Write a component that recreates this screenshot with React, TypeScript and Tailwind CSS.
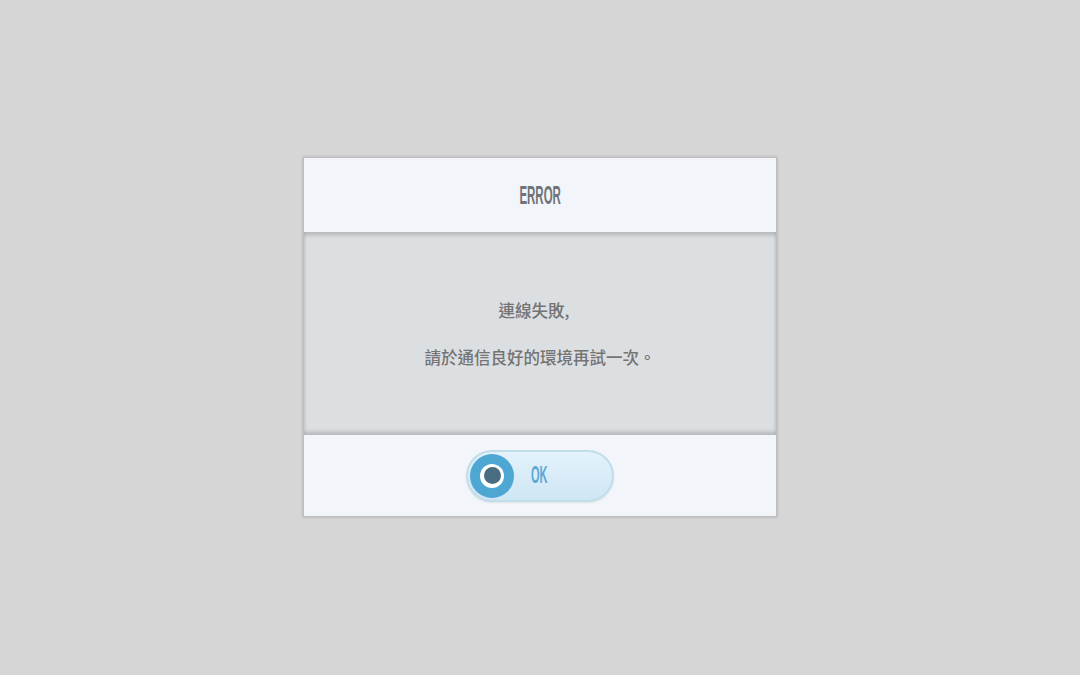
import React from "react";

const condensed = { fontFamily: '"Liberation Sans", Arial, sans-serif' };

function OkButton() {
  return (
    <button className="relative flex h-[52px] w-[148px] items-center rounded-full border-2 border-[#c3dcea] bg-gradient-to-b from-[#e3f2fb] to-[#cfe6f4] pl-[2px] shadow-[0_1px_2px_rgba(0,0,0,0.08)]">
      <span className="flex h-[44px] w-[44px] items-center justify-center rounded-full bg-[#4ea6d3]">
        <span className="flex h-[24px] w-[24px] items-center justify-center rounded-full bg-white">
          <span className="h-[17px] w-[17px] rounded-full bg-[#4a6c80]" />
        </span>
      </span>
      <span
        className="ml-[17px] inline-block origin-left scale-x-[0.48] text-[23px] font-bold leading-none text-[#5aa9d4]"
        style={condensed}
      >
        OK
      </span>
    </button>
  );
}

export default function App() {
  return (
    <div className="flex h-[675px] w-[1080px] items-center justify-center bg-[#d6d6d6]">
      <div className="mt-[-1px] flex w-[474px] flex-col border border-[#bdbdbd] bg-[#f2f6fb] shadow-[0_0_3px_rgba(0,0,0,0.2)]">
        <div className="flex h-[74px] items-center justify-center">
          <span
            className="inline-block scale-x-[0.46] text-[25px] font-bold leading-none text-[#717377]"
            style={condensed}
          >
            ERROR
          </span>
        </div>
        <div
          className="flex h-[203px] flex-col items-center justify-center gap-[27px] bg-[#dcdfe2] text-[16.5px] font-medium text-[#747474] shadow-[inset_0_4px_4px_-1px_rgba(0,0,0,0.18),inset_0_-4px_4px_-1px_rgba(0,0,0,0.18)]"
          style={{ fontFamily: '"Noto Sans CJK TC", "Noto Sans", sans-serif' }}
        >
          <p className="mr-[12px] leading-5">連線失敗,</p>
          <p className="leading-5">請於通信良好的環境再試一次。</p>
        </div>
        <div className="flex h-[81px] items-center justify-center">
          <OkButton />
        </div>
      </div>
    </div>
  );
}
